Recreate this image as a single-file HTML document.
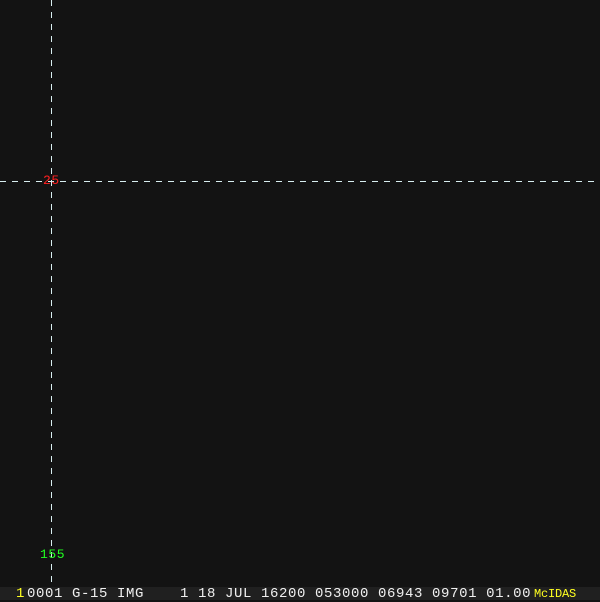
<!DOCTYPE html>
<html><head><style>
body{margin:0;width:600px;height:600px;background:#131313;position:relative;overflow:hidden;font-family:"Liberation Mono",monospace}
.t{position:absolute;font-size:14px;line-height:12px;white-space:pre;letter-spacing:0.6px}
</style></head><body>
<div style="position:absolute;left:51px;top:0;width:1px;height:584px;background:repeating-linear-gradient(to bottom,#d8eef0 0 6px,transparent 6px 12px)"></div>
<div style="position:absolute;left:0;top:181px;width:600px;height:1px;background:repeating-linear-gradient(to right,#d8eef0 0 6px,transparent 6px 12px)"></div>
<div class="t" style="left:43px;top:175px;color:#ff2020;font-size:13px">25</div>
<div class="t" style="left:40px;top:549px;color:#20ff20;font-size:13px">155</div>
<div style="position:absolute;left:0;top:587px;width:600px;height:13px;background:#202020"></div>
<div class="t" style="left:16px;top:588px;color:#ffff20">1</div>
<div class="t" style="left:27px;top:588px;color:#f0f0f0">0001 G-15 IMG    1 18 JUL 16200 053000 06943 09701 01.00</div>
<div class="t" style="left:534px;top:588px;color:#ffff20;font-size:12px;letter-spacing:-0.2px">McIDAS</div>
</body></html>
